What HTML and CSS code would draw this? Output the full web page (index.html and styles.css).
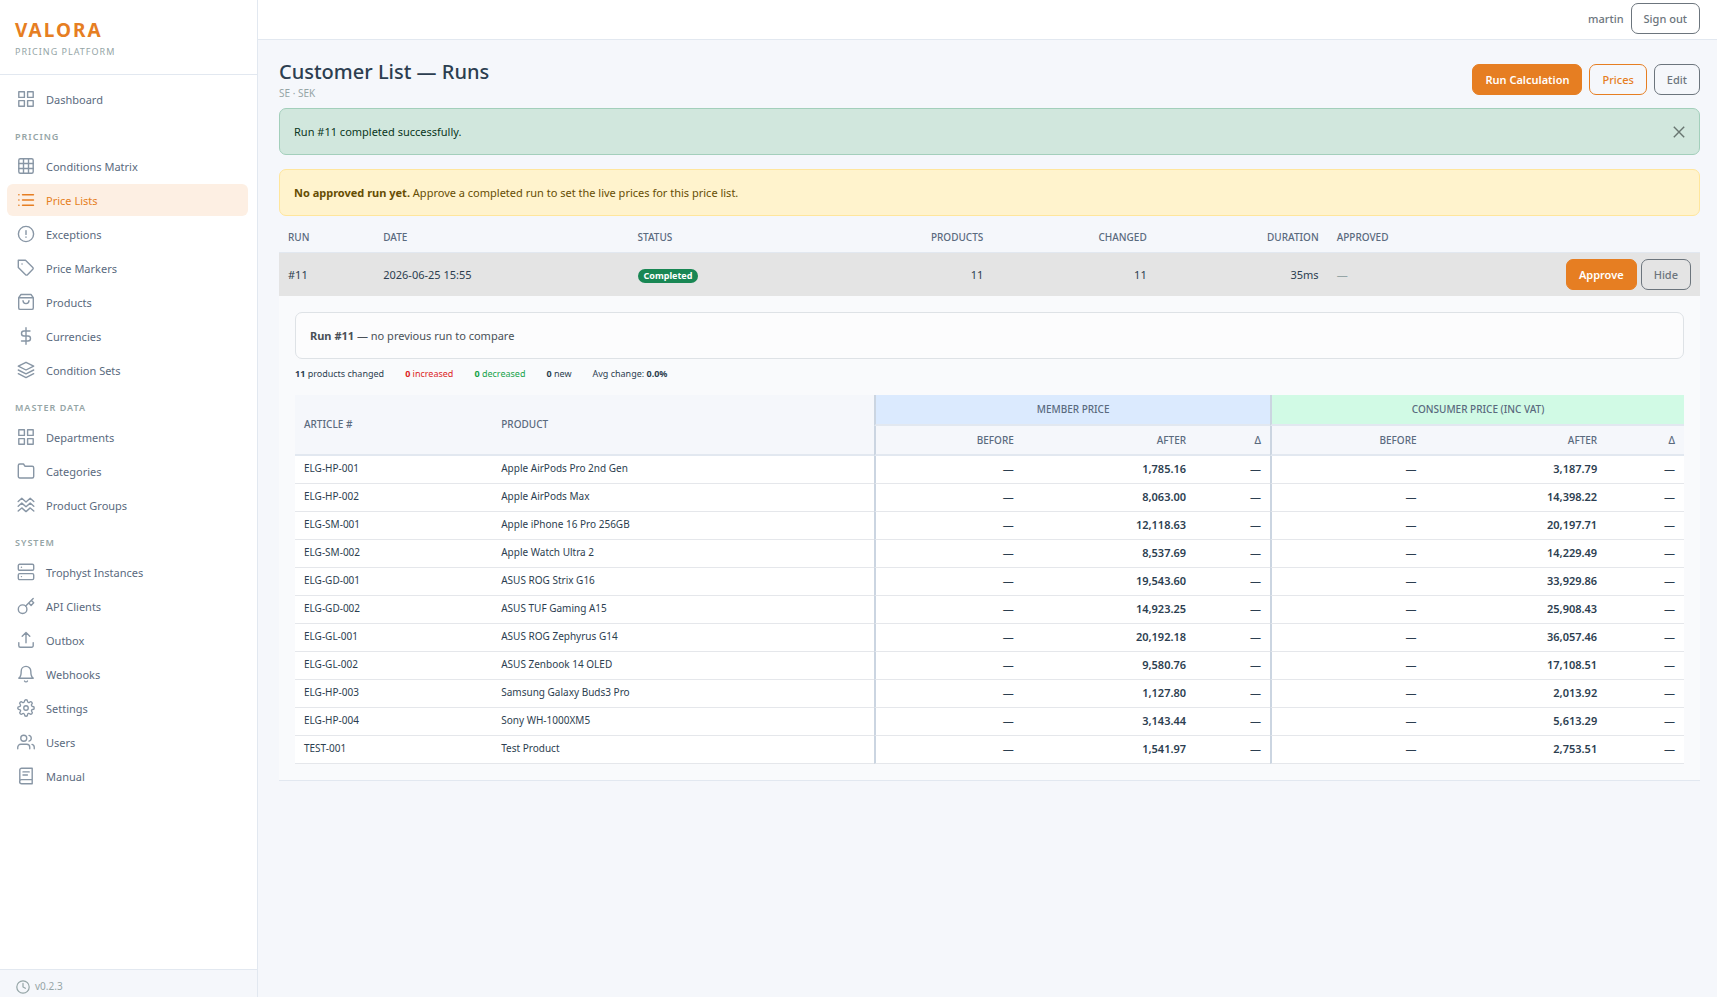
FILE: index.html
```
<!DOCTYPE html>
<html lang="en">
<head>
  <meta charset="UTF-8">
  <meta name="viewport" content="width=device-width, initial-scale=1">
  <title>Customer List — Runs</title>
  <link rel="stylesheet" href="styles.css">
</head>
<body>
  <div class="layout">
    <aside class="sidebar">
      <div class="brand">
        <div class="brand-name">VALORA</div>
        <div class="brand-sub">PRICING PLATFORM</div>
      </div>
      <nav class="nav">
        <a href="#" class="nav-item">
          <svg class="icon" viewBox="0 0 18 18"><rect x="1.8" y="1.8" width="5.6" height="5.6"/><rect x="10.6" y="1.8" width="5.6" height="5.6"/><rect x="1.8" y="10.6" width="5.6" height="5.6"/><rect x="10.6" y="10.6" width="5.6" height="5.6"/></svg>
          Dashboard
        </a>

        <div class="nav-label">PRICING</div>
        <a href="#" class="nav-item">
          <svg class="icon" viewBox="0 0 18 18"><rect x="1.8" y="1.8" width="14.4" height="14.4" rx="1.5"/><path d="M1.8 6.5h14.4M1.8 11.5h14.4M6.5 1.8v14.4M11.5 1.8v14.4"/></svg>
          Conditions Matrix
        </a>
        <a href="#" class="nav-item active">
          <svg class="icon" viewBox="0 0 18 18"><path d="M5.5 3.7h11M5.5 9h11M5.5 14.3h11M1.8 3.7h.2M1.8 9h.2M1.8 14.3h.2"/></svg>
          Price Lists
        </a>
        <a href="#" class="nav-item">
          <svg class="icon" viewBox="0 0 18 18"><circle cx="9" cy="9" r="7.6"/><path d="M9 5.6V9.4M9 12v.2"/></svg>
          Exceptions
        </a>
        <a href="#" class="nav-item">
          <svg class="icon" viewBox="0 0 18 18"><path d="M1.3 1.3h7.2l7.3 7.1a1.3 1.3 0 0 1 0 1.9l-5.3 5.4a1.3 1.3 0 0 1-1.9 0L1.3 8.5zM5 5h.1"/></svg>
          Price Markers
        </a>
        <a href="#" class="nav-item">
          <svg class="icon" viewBox="0 0 18 18"><path d="M4 1.5L1.7 4.6v10.3a1.5 1.5 0 0 0 1.5 1.5h11.6a1.5 1.5 0 0 0 1.5-1.5V4.6L14 1.5zM1.7 4.8h14.6M12 7.6a3 3 0 0 1-6 0"/></svg>
          Products
        </a>
        <a href="#" class="nav-item">
          <svg class="icon" viewBox="0 0 18 18"><path d="M9 .8v16.4M13 4H7a2.5 2.5 0 0 0 0 5h4a2.5 2.5 0 0 1 0 5H4.5"/></svg>
          Currencies
        </a>
        <a href="#" class="nav-item">
          <svg class="icon" viewBox="0 0 18 18"><path d="M9 1.3L1.3 5.1 9 9l7.7-3.9zM1.3 12.7L9 16.6l7.7-3.9M1.3 9L9 12.8 16.7 9"/></svg>
          Condition Sets
        </a>

        <div class="nav-label">MASTER DATA</div>
        <a href="#" class="nav-item">
          <svg class="icon" viewBox="0 0 18 18"><rect x="1.8" y="1.8" width="5.6" height="5.6"/><rect x="10.6" y="1.8" width="5.6" height="5.6"/><rect x="1.8" y="10.6" width="5.6" height="5.6"/><rect x="10.6" y="10.6" width="5.6" height="5.6"/></svg>
          Departments
        </a>
        <a href="#" class="nav-item">
          <svg class="icon" viewBox="0 0 18 18"><path d="M16.7 14.5a1.5 1.5 0 0 1-1.5 1.5H2.8a1.5 1.5 0 0 1-1.5-1.5v-11A1.5 1.5 0 0 1 2.8 2h3.7l1.6 2.3h7.1a1.5 1.5 0 0 1 1.5 1.5z"/></svg>
          Categories
        </a>
        <a href="#" class="nav-item">
          <svg class="icon" viewBox="0 0 18 18"><path d="M1.2 5.5l3.6-3.2L9 6l4.2-3.7 3.6 3.2M1.2 10.3l3.6-3.2L9 10.8l4.2-3.7 3.6 3.2M1.2 15.1l3.6-3.2L9 15.6l4.2-3.7 3.6 3.2"/></svg>
          Product Groups
        </a>

        <div class="nav-label">SYSTEM</div>
        <a href="#" class="nav-item">
          <svg class="icon" viewBox="0 0 18 18"><rect x="1.3" y="1.3" width="15.4" height="6" rx="1.3"/><rect x="1.3" y="10.6" width="15.4" height="6" rx="1.3"/><path d="M4.4 4.3h.1M4.4 13.6h.1"/></svg>
          Trophyst Instances
        </a>
        <a href="#" class="nav-item">
          <svg class="icon" viewBox="0 0 18 18"><circle cx="5.6" cy="12.2" r="4.3"/><path d="M8.7 9.1l7.5-7.5M11.8 6l2.3 2.4 2.6-2.6-2.3-2.4"/></svg>
          API Clients
        </a>
        <a href="#" class="nav-item">
          <svg class="icon" viewBox="0 0 18 18"><path d="M1.8 11.6v3.2a1.5 1.5 0 0 0 1.5 1.5h11.4a1.5 1.5 0 0 0 1.5-1.5v-3.2M5.2 5.2L9 1.5l3.8 3.7M9 1.5v10.3"/></svg>
          Outbox
        </a>
        <a href="#" class="nav-item">
          <svg class="icon" viewBox="0 0 18 18"><path d="M13.8 6.2a4.8 4.8 0 0 0-9.6 0c0 5.4-2.4 7-2.4 7h14.4s-2.4-1.6-2.4-7M10.5 16a1.7 1.7 0 0 1-3 0"/></svg>
          Webhooks
        </a>
        <a href="#" class="nav-item">
          <svg class="icon" viewBox="0 0 24 24"><g stroke-width="1.8"><circle cx="12" cy="12" r="3"/><path d="M19.4 15a1.65 1.65 0 0 0 .33 1.82l.06.06a2 2 0 0 1-2.83 2.83l-.06-.06a1.65 1.65 0 0 0-2.8 1.17V21a2 2 0 0 1-4 0v-.09A1.65 1.65 0 0 0 9 19.4a1.65 1.65 0 0 0-1.82.33l-.06.06a2 2 0 0 1-2.83-2.83l.06-.06a1.65 1.65 0 0 0-1.17-2.8H3a2 2 0 0 1 0-4h.09A1.65 1.65 0 0 0 4.6 9a1.65 1.65 0 0 0-.33-1.82l-.06-.06a2 2 0 0 1 2.83-2.83l.06.06A1.65 1.65 0 0 0 9 4.6 1.65 1.65 0 0 0 10 3.09V3a2 2 0 0 1 4 0v.09a1.65 1.65 0 0 0 2.8 1.17l.06-.06a2 2 0 0 1 2.83 2.83l-.06.06A1.65 1.65 0 0 0 19.4 9a1.65 1.65 0 0 0 1.51 1H21a2 2 0 0 1 0 4h-.09a1.65 1.65 0 0 0-1.51 1z"/></g></svg>
          Settings
        </a>
        <a href="#" class="nav-item">
          <svg class="icon" viewBox="0 0 24 24"><g stroke-width="1.8"><path d="M17 21v-2a4 4 0 0 0-4-4H5a4 4 0 0 0-4 4v2"/><circle cx="9" cy="7" r="4"/><path d="M23 21v-2a4 4 0 0 0-3-3.87M16 3.13a4 4 0 0 1 0 7.75"/></g></svg>
          Users
        </a>
        <a href="#" class="nav-item">
          <svg class="icon" viewBox="0 0 18 18"><path d="M2.8 14.6V3.1a1.8 1.8 0 0 1 1.8-1.8h10.6v15.4H4.7a2 2 0 0 1 0-4.1h10.5M6 4.9h6.2M6 8h4.4"/></svg>
          Manual
        </a>
      </nav>
      <div class="sidebar-footer">
        <svg class="icon-clock" viewBox="0 0 14 14"><circle cx="7" cy="7" r="6.2"/><path d="M7 3.4V7l2.4 1.3"/></svg>
        v0.2.3
      </div>
    </aside>

    <div class="main">
      <header class="topbar">
        <span class="user">martin</span>
        <button type="button" class="btn btn-outline">Sign out</button>
      </header>

      <main class="content">
        <div class="page-header">
          <div>
            <h1>Customer List — Runs</h1>
            <div class="subtitle">SE · SEK</div>
          </div>
          <div class="actions">
            <button type="button" class="btn btn-primary">Run Calculation</button>
            <a href="#" class="btn btn-outline-primary">Prices</a>
            <a href="#" class="btn btn-outline">Edit</a>
          </div>
        </div>

        <div class="alert alert-success">
          <span>Run #11 completed successfully.</span>
          <button type="button" class="close" aria-label="Close">
            <svg viewBox="0 0 12 12"><path d="M.8.8l10.4 10.4M11.2.8L.8 11.2"/></svg>
          </button>
        </div>
        <div class="alert alert-warning">
          <span><strong>No approved run yet.</strong> Approve a completed run to set the live prices for this price list.</span>
        </div>

        <table class="runs">
          <colgroup>
            <col class="run-id"><col class="run-date"><col class="run-status"><col class="run-products">
            <col class="run-changed"><col class="run-duration"><col class="run-approved"><col>
          </colgroup>
          <thead>
            <tr>
              <th>RUN</th>
              <th>DATE</th>
              <th>STATUS</th>
              <th class="num">PRODUCTS</th>
              <th class="num">CHANGED</th>
              <th class="num">DURATION</th>
              <th>APPROVED</th>
              <th></th>
            </tr>
          </thead>
          <tbody>
            <tr class="run-row">
              <td>#11</td>
              <td>2026-06-25 15:55</td>
              <td><span class="badge">Completed</span></td>
              <td class="num">11</td>
              <td class="num">11</td>
              <td class="num">35ms</td>
              <td class="muted">—</td>
              <td>
                <div class="row-actions">
                  <button type="button" class="btn btn-primary">Approve</button>
                  <button type="button" class="btn btn-outline">Hide</button>
                </div>
              </td>
            </tr>
            <tr class="detail-row">
              <td colspan="8">
                <div class="alert alert-light"><span><strong>Run #11</strong> — no previous run to compare</span></div>
                <div class="stats">
                  <span><strong>11</strong> products changed</span>
                  <span class="up"><strong>0</strong> increased</span>
                  <span class="down"><strong>0</strong> decreased</span>
                  <span><strong>0</strong> new</span>
                  <span>Avg change: <strong>0.0%</strong></span>
                </div>
                <table class="diff">
                  <colgroup>
                    <col class="d-article"><col class="d-product">
                    <col class="d-mbefore"><col class="d-mafter"><col class="d-mdelta">
                    <col class="d-cbefore"><col class="d-cafter"><col class="d-cdelta">
                  </colgroup>
                  <thead>
                    <tr>
                      <th rowspan="2">ARTICLE #</th>
                      <th rowspan="2">PRODUCT</th>
                      <th colspan="3" class="group member sep">MEMBER PRICE</th>
                      <th colspan="3" class="group consumer sep">CONSUMER PRICE (INC VAT)</th>
                    </tr>
                    <tr>
                      <th class="num sep">BEFORE</th><th class="num">AFTER</th><th class="num">Δ</th>
                      <th class="num sep">BEFORE</th><th class="num">AFTER</th><th class="num">Δ</th>
                    </tr>
                  </thead>
                  <tbody>
                    <tr><td>ELG-HP-001</td><td>Apple AirPods Pro 2nd Gen</td><td class="num sep">—</td><td class="num price">1,785.16</td><td class="num">—</td><td class="num sep">—</td><td class="num price">3,187.79</td><td class="num">—</td></tr>
                    <tr><td>ELG-HP-002</td><td>Apple AirPods Max</td><td class="num sep">—</td><td class="num price">8,063.00</td><td class="num">—</td><td class="num sep">—</td><td class="num price">14,398.22</td><td class="num">—</td></tr>
                    <tr><td>ELG-SM-001</td><td>Apple iPhone 16 Pro 256GB</td><td class="num sep">—</td><td class="num price">12,118.63</td><td class="num">—</td><td class="num sep">—</td><td class="num price">20,197.71</td><td class="num">—</td></tr>
                    <tr><td>ELG-SM-002</td><td>Apple Watch Ultra 2</td><td class="num sep">—</td><td class="num price">8,537.69</td><td class="num">—</td><td class="num sep">—</td><td class="num price">14,229.49</td><td class="num">—</td></tr>
                    <tr><td>ELG-GD-001</td><td>ASUS ROG Strix G16</td><td class="num sep">—</td><td class="num price">19,543.60</td><td class="num">—</td><td class="num sep">—</td><td class="num price">33,929.86</td><td class="num">—</td></tr>
                    <tr><td>ELG-GD-002</td><td>ASUS TUF Gaming A15</td><td class="num sep">—</td><td class="num price">14,923.25</td><td class="num">—</td><td class="num sep">—</td><td class="num price">25,908.43</td><td class="num">—</td></tr>
                    <tr><td>ELG-GL-001</td><td>ASUS ROG Zephyrus G14</td><td class="num sep">—</td><td class="num price">20,192.18</td><td class="num">—</td><td class="num sep">—</td><td class="num price">36,057.46</td><td class="num">—</td></tr>
                    <tr><td>ELG-GL-002</td><td>ASUS Zenbook 14 OLED</td><td class="num sep">—</td><td class="num price">9,580.76</td><td class="num">—</td><td class="num sep">—</td><td class="num price">17,108.51</td><td class="num">—</td></tr>
                    <tr><td>ELG-HP-003</td><td>Samsung Galaxy Buds3 Pro</td><td class="num sep">—</td><td class="num price">1,127.80</td><td class="num">—</td><td class="num sep">—</td><td class="num price">2,013.92</td><td class="num">—</td></tr>
                    <tr><td>ELG-HP-004</td><td>Sony WH-1000XM5</td><td class="num sep">—</td><td class="num price">3,143.44</td><td class="num">—</td><td class="num sep">—</td><td class="num price">5,613.29</td><td class="num">—</td></tr>
                    <tr><td>TEST-001</td><td>Test Product</td><td class="num sep">—</td><td class="num price">1,541.97</td><td class="num">—</td><td class="num sep">—</td><td class="num price">2,753.51</td><td class="num">—</td></tr>
                  </tbody>
                </table>
              </td>
            </tr>
          </tbody>
        </table>
      </main>
    </div>
  </div>
</body>
</html>
```

FILE: styles.css
```
* {
  box-sizing: border-box;
}
body {
  margin: 0;
  font-family: "Noto Sans", "Segoe UI", sans-serif;
  font-size: 11px;
  line-height: 17px;
  color: #2c3e50;
  background-color: #f5f7fb;
}
a {
  text-decoration: none;
}
.layout {
  display: flex;
  min-height: 100vh;
}

/* sidebar */
.sidebar {
  width: 258px;
  flex-shrink: 0;
  display: flex;
  flex-direction: column;
  background: #fff;
  border-right: 1px solid #e2e8f0;
}
.brand {
  padding: 19px 15px 12px;
  border-bottom: 1px solid #e2e8f0;
}
.brand-name {
  font-size: 19px;
  font-weight: 700;
  line-height: 23px;
  letter-spacing: 2px;
  color: #e67e22;
}
.brand-sub {
  font-size: 9px;
  line-height: 20px;
  letter-spacing: 1px;
  color: #95a5a6;
}
.nav {
  flex: 1;
  padding: 8px 9px 8px 7px;
}
.nav-item {
  display: flex;
  align-items: center;
  gap: 11px;
  height: 32px;
  margin-bottom: 2px;
  padding: 0 10px;
  border-radius: 6px;
  color: #5a6a7e;
}
.nav-item.active {
  background: #fdefe3;
  color: #e67e22;
}
.icon {
  width: 18px;
  height: 18px;
  fill: none;
  stroke: #8896a5;
  stroke-width: 1.4;
  stroke-linecap: round;
  stroke-linejoin: round;
}
.nav-item.active .icon {
  stroke: #e67e22;
}
.nav-label {
  padding: 11px 8px 5px;
  font-size: 9px;
  font-weight: 600;
  letter-spacing: 1px;
  color: #95a5a6;
}
.sidebar-footer {
  display: flex;
  align-items: center;
  gap: 5px;
  padding: 8px 16px 2px;
  border-top: 1px solid #e2e8f0;
  background: #f5f7fb;
  font-size: 10px;
  color: #95a5a6;
}
.icon-clock {
  width: 14px;
  height: 14px;
  fill: none;
  stroke: #95a5a6;
  stroke-width: 1.2;
  stroke-linecap: round;
}

/* top bar */
.main {
  flex: 1;
  min-width: 0;
}
.topbar {
  display: flex;
  justify-content: flex-end;
  align-items: center;
  gap: 7px;
  padding: 3px 17px 5px;
  background: #fff;
  border-bottom: 1px solid #e2e8f0;
}
.user {
  font-weight: 500;
  color: #6c757d;
}
.btn {
  display: inline-block;
  padding: 6px 12px;
  border: 1px solid #6c757d;
  border-radius: 7px;
  background: transparent;
  font-family: inherit;
  font-size: 11px;
  font-weight: 500;
  line-height: 17px;
  color: #6c757d;
  cursor: pointer;
}
.btn-primary {
  background: #e67e22;
  border-color: #e67e22;
  font-weight: 600;
  color: #fff;
}
.btn-outline-primary {
  border-color: #e67e22;
  color: #e67e22;
}

/* page */
.content {
  padding: 18px 17px 21px 21px;
}
.page-header {
  display: flex;
  justify-content: space-between;
  align-items: center;
  margin-bottom: 7px;
}
h1 {
  margin: 0;
  font-size: 20px;
  font-weight: 500;
  line-height: 27px;
}
.subtitle {
  font-size: 10px;
  line-height: 16px;
  color: #95a5a6;
}
.actions {
  display: flex;
  gap: 7px;
}
.alert {
  display: flex;
  justify-content: space-between;
  align-items: center;
  margin-bottom: 14px;
  padding: 14px;
  border: 1px solid;
  border-radius: 7px;
}
.alert-success {
  background: #d1e7dd;
  border-color: #a3cfbb;
  color: #0a3622;
}
.alert-warning {
  margin-bottom: 6px;
  background: #fff3cd;
  border-color: #ffe69c;
  color: #664d03;
}
.alert-light {
  margin-bottom: 6px;
  background: #fcfcfd;
  border-color: #dee2e6;
  color: #495057;
}
.close {
  display: flex;
  padding: 0;
  border: 0;
  background: none;
  cursor: pointer;
}
.close svg {
  width: 12px;
  height: 12px;
  fill: none;
  stroke: #687570;
  stroke-width: 1.4;
}

/* tables */
table {
  width: 100%;
  border-spacing: 0;
  table-layout: fixed;
}
th, td {
  padding: 0 9px;
  text-align: left;
}
th {
  font-size: 10px;
  font-weight: 500;
  color: #5a6a7e;
}
.num {
  text-align: right;
}
.runs > thead th {
  height: 31px;
  border-bottom: 1px solid #e2e8f0;
}
.run-id { width: 6.7%; }
.run-date { width: 17.9%; }
.run-status { width: 12.8%; }
.run-products { width: 12.8%; }
.run-changed { width: 11.5%; }
.run-duration { width: 12.1%; }
.run-approved { width: 9%; }
.run-row td {
  padding-top: 6px;
  padding-bottom: 6px;
  background: #e4e4e4;
}
.run-row .muted {
  color: #95a5a6;
}
.row-actions {
  display: flex;
  justify-content: flex-end;
  gap: 4px;
}
.badge {
  display: inline-block;
  padding: 0 6px;
  border-radius: 7px;
  background: #198754;
  font-size: 9px;
  font-weight: 700;
  line-height: 14px;
  vertical-align: middle;
  color: #fff;
}
.detail-row > td {
  padding: 16px;
  background: #f9fafc;
  border-bottom: 1px solid #e2e8f0;
}
.stats {
  display: flex;
  gap: 21px;
  margin-bottom: 13px;
  font-size: 9px;
}
.up {
  color: #dc2626;
}
.down {
  color: #16a34a;
}
.diff th {
  height: 30px;
  background: #f5f7fb;
  border-bottom: 2px solid #e2e8f0;
}
.diff .group {
  height: 31px;
  text-align: center;
}
.diff .member {
  background: #dbeafe;
}
.diff .consumer {
  background: #d1fae5;
}
.diff .sep {
  border-left: 2px solid #cbd5e1;
}
.diff td {
  height: 28px;
  padding-bottom: 2px;
  background: #fff;
  border-bottom: 1px solid #e5e7eb;
  font-size: 10px;
}
.diff .num {
  font-size: 11px;
}
.diff th.num {
  font-size: 10px;
}
.diff .price {
  font-weight: 600;
}
.d-article { width: 14.2%; }
.d-product { width: 27.5%; }
.d-mbefore { width: 10.7%; }
.d-mafter { width: 12.4%; }
.d-mdelta { width: 5.4%; }
.d-cbefore { width: 11.2%; }
.d-cafter { width: 13%; }
.d-cdelta { width: 5.6%; }
```
